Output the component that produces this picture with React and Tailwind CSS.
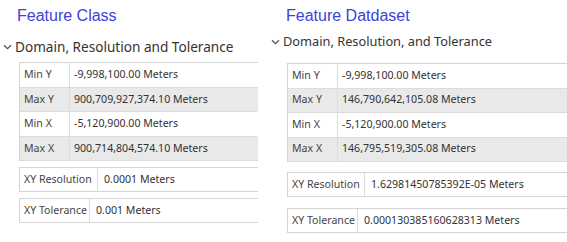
import React from 'react'

const UI = { fontFamily: '"Noto Sans", "Open Sans", sans-serif' }
const TITLE = { fontFamily: '"Liberation Sans", Arial, sans-serif' }

function Chevron() {
  return (
    <svg width="9" height="6" viewBox="0 0 9 6" className="shrink-0">
      <path d="M1 1.2 L4.5 4.6 L8 1.2" fill="none" stroke="#555" strokeWidth="1.3" />
    </svg>
  )
}

function Row({ label, value, shaded, labelW }) {
  return (
    <div className={`flex h-[24.5px] items-center border-b border-[#dcdcdc] ${shaded ? 'bg-[#e9e9e9]' : 'bg-white'}`}>
      <div className={`${labelW} h-full flex items-center pl-[4px] border-r border-[#dcdcdc] text-[#444]`}>{label}</div>
      <div className="pl-[4px] text-[#333] whitespace-nowrap">{value}</div>
    </div>
  )
}

function Box({ label, value, labelW }) {
  return (
    <div className="flex h-[25px] items-center border border-r-0 border-[#d4d4d4] bg-white">
      <div className={`${labelW} h-full flex items-center pl-[4px] border-r border-[#dcdcdc] text-[#444] whitespace-nowrap`}>{label}</div>
      <div className="pl-[6px] text-[#333] whitespace-nowrap">{value}</div>
    </div>
  )
}

function Panel({ title, heading, rows, res, tol, resW, tolW, headGap, tableGap, boxGap, boxesGap, headSize, titlePl, chevPl }) {
  return (
    <div className="flex flex-col">
      <div className={`${titlePl} pt-[6px] text-[16px] leading-[20px] text-[#4040dc]`} style={TITLE}>{title}</div>
      <div className={`${headGap} ${chevPl} flex items-center gap-[3px] ${headSize} text-[#333]`} style={UI}>
        <Chevron />
        <span className="whitespace-nowrap">{heading}</span>
      </div>
      <div className={`${tableGap} ml-[19px] text-[10.6px]`} style={UI}>
        <div className="border-t border-l border-[#d4d4d4]">
          {rows.map((r, i) => (
            <Row key={r[0]} label={r[0]} value={r[1]} shaded={i % 2 === 1} labelW="w-[50px]" />
          ))}
        </div>
        <div className={`${boxGap} ${boxesGap} flex flex-col`}>
          <Box label="XY Resolution" value={res} labelW={resW} />
          <Box label="XY Tolerance" value={tol} labelW={tolW} />
        </div>
      </div>
    </div>
  )
}

export default function App() {
  return (
    <div className="w-[567px] h-[242px] bg-white overflow-hidden flex">
      <div className="w-[258px] shrink-0">
        <Panel
          title="Feature Class"
          heading="Domain, Resolution and Tolerance"
          headSize="text-[13.6px]"
          titlePl="pl-[17px]"
          chevPl="pl-[3px]"
          headGap="mt-[11px]"
          tableGap="mt-[5px]"
          boxGap="mt-[6px]"
          boxesGap="gap-[6px]"
          rows={[
            ['Min Y', '-9,998,100.00 Meters'],
            ['Max Y', '900,709,927,374.10 Meters'],
            ['Min X', '-5,120,900.00 Meters'],
            ['Max X', '900,714,804,574.10 Meters'],
          ]}
          res="0.0001 Meters"
          tol="0.001 Meters"
          resW="w-[78px]"
          tolW="w-[70px]"
        />
      </div>
      <div className="flex-1 min-w-0 pl-[10px]">
        <Panel
          title="Feature Datdaset"
          heading="Domain, Resolution, and Tolerance"
          headSize="text-[12.8px]"
          titlePl="pl-[18px]"
          chevPl="pl-[3px]"
          headGap="mt-[6px]"
          tableGap="mt-[12px]"
          boxGap="mt-[10px]"
          boxesGap="gap-[11px]"
          rows={[
            ['Min Y', '-9,998,100.00 Meters'],
            ['Max Y', '146,790,642,105.08 Meters'],
            ['Min X', '-5,120,900.00 Meters'],
            ['Max X', '146,795,519,305.08 Meters'],
          ]}
          res="1.62981450785392E-05 Meters"
          tol="0.000130385160628313 Meters"
          resW="w-[77px]"
          tolW="w-[70px]"
        />
      </div>
    </div>
  )
}
